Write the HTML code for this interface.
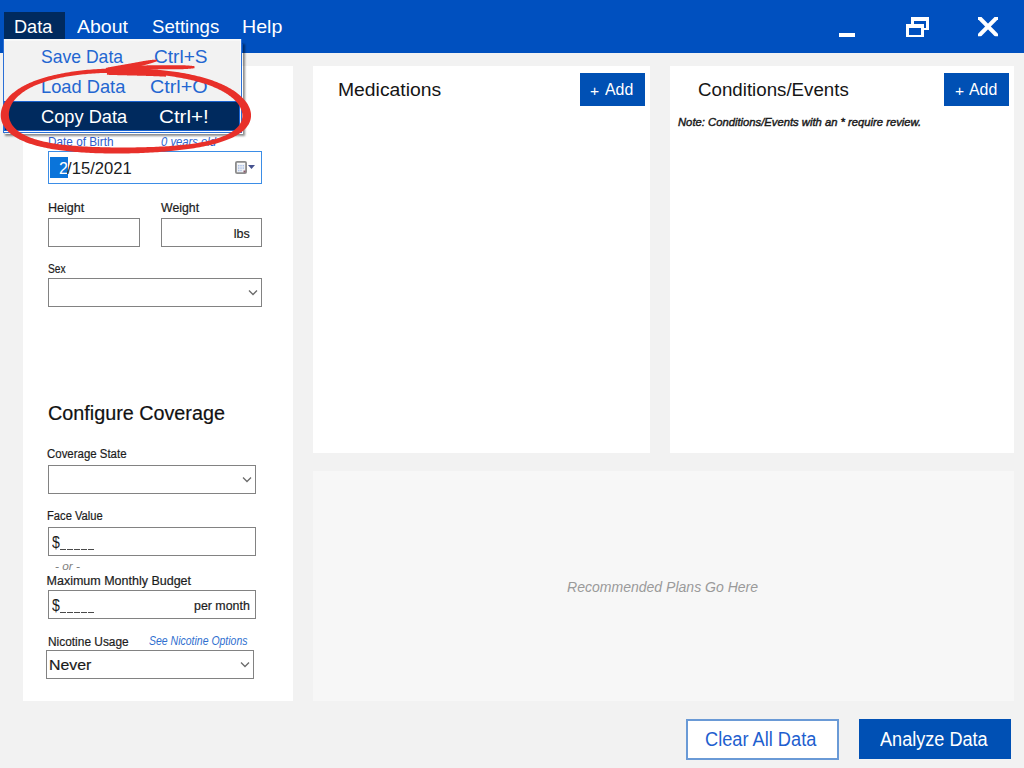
<!DOCTYPE html>
<html><head><meta charset="utf-8">
<style>
html,body{margin:0;padding:0;}
body{width:1024px;height:768px;overflow:hidden;position:relative;background:#f2f2f2;font-family:"Liberation Sans", sans-serif;}
.a{position:absolute;box-sizing:border-box;}
.t{position:absolute;display:block;white-space:pre;line-height:0;transform-origin:0 0;font-family:"Liberation Sans", sans-serif;-webkit-text-stroke:0.2px currentColor;}
.box{position:absolute;box-sizing:border-box;background:#fff;border:1px solid #828282;}
</style></head><body>
<!-- title bar -->
<div class="a" style="left:0;top:0;width:1024px;height:53px;background:#0050bf"></div>
<div class="a" style="left:4px;top:12px;width:61px;height:27px;background:#002a5e"></div>
<div class="a" style="left:839px;top:33px;width:16px;height:4px;background:#fff"></div>
<div class="a" style="left:911px;top:17px;width:18px;height:13px;border:3px solid #fff;border-top-width:4px;border-bottom-width:2px"></div>
<div class="a" style="left:906px;top:24px;width:18px;height:13px;border:3px solid #fff;border-top-width:4px;border-bottom-width:2px;background:#0050bf"></div>
<svg class="a" style="left:0;top:0" width="1024" height="60"><defs><clipPath id="xc"><rect x="978" y="17" width="20" height="19.2"/></clipPath></defs><g clip-path="url(#xc)" stroke="#fff" stroke-width="4"><line x1="977.2" y1="15.5" x2="998.8" y2="37.5"/><line x1="998.8" y1="15.5" x2="977.2" y2="37.5"/></g></svg>
<!-- panels -->
<div class="a" style="left:23px;top:66px;width:270px;height:635px;background:#fff"></div>
<div class="a" style="left:313px;top:66px;width:337px;height:387px;background:#fff"></div>
<div class="a" style="left:670px;top:66px;width:344px;height:387px;background:#fff"></div>
<div class="a" style="left:313px;top:471px;width:701px;height:230px;background:#f7f7f7"></div>
<!-- date picker -->
<div class="box" style="left:48px;top:151px;width:214px;height:33px;border-color:#3b8de6"></div>
<div class="a" style="left:50px;top:157px;width:18px;height:21px;background:#0a74da"></div>
<svg class="a" style="left:234px;top:160px" width="14" height="15"><rect x="1.9" y="1.9" width="10.2" height="11.2" rx="1.2" fill="#eef0f4" stroke="#8c8c8c" stroke-width="1.8"/><rect x="3" y="3" width="8" height="1.2" fill="#fafafa"/>
<g fill="#aac0e8"><rect x="4" y="5" width="1.4" height="1.4"/><rect x="6.3" y="5" width="1.4" height="1.4"/><rect x="8.6" y="5" width="1.4" height="1.4"/><rect x="4" y="7.4" width="1.4" height="1.4"/><rect x="6.3" y="7.4" width="1.4" height="1.4"/><rect x="8.6" y="7.4" width="1.4" height="1.4"/><rect x="4" y="9.8" width="1.4" height="1.4"/><rect x="6.3" y="9.8" width="1.4" height="1.4"/></g><rect x="9.5" y="10.5" width="2" height="2" fill="#8a5a6a"/></svg>
<svg class="a" style="left:248px;top:165px" width="8" height="5"><polygon points="0,0 7,0 3.5,4" fill="#45528f"/></svg>
<!-- height/weight/sex -->
<div class="box" style="left:48px;top:218px;width:92px;height:29px"></div>
<div class="box" style="left:161px;top:218px;width:101px;height:29px"></div>
<div class="box" style="left:48px;top:278px;width:214px;height:29px"></div>
<svg class="a" style="left:248px;top:289px" width="11" height="8"><polyline points="1,1.5 5,5.5 9,1.5" fill="none" stroke="#6b6b6b" stroke-width="1.3"/></svg>
<!-- coverage -->
<div class="box" style="left:48px;top:465px;width:208px;height:29px"></div>
<svg class="a" style="left:242px;top:476px" width="11" height="8"><polyline points="1,1.5 5,5.5 9,1.5" fill="none" stroke="#6b6b6b" stroke-width="1.3"/></svg>
<div class="box" style="left:48px;top:527px;width:208px;height:29px"></div>
<div class="box" style="left:48px;top:590px;width:208px;height:29px"></div>
<div class="box" style="left:46px;top:650px;width:208px;height:29px"></div>
<svg class="a" style="left:240px;top:661px" width="11" height="8"><polyline points="1,1.5 5,5.5 9,1.5" fill="none" stroke="#6b6b6b" stroke-width="1.3"/></svg>
<!-- underscores -->
<div class="a" style="left:60px;top:549px;width:6px;height:1px;background:#4a4a4a"></div><div class="a" style="left:67px;top:549px;width:6px;height:1px;background:#4a4a4a"></div><div class="a" style="left:74px;top:549px;width:6px;height:1px;background:#4a4a4a"></div><div class="a" style="left:81px;top:549px;width:6px;height:1px;background:#4a4a4a"></div><div class="a" style="left:88px;top:549px;width:6px;height:1px;background:#4a4a4a"></div>
<div class="a" style="left:60px;top:612px;width:6px;height:1px;background:#4a4a4a"></div><div class="a" style="left:67px;top:612px;width:6px;height:1px;background:#4a4a4a"></div><div class="a" style="left:74px;top:612px;width:6px;height:1px;background:#4a4a4a"></div><div class="a" style="left:81px;top:612px;width:6px;height:1px;background:#4a4a4a"></div><div class="a" style="left:88px;top:612px;width:6px;height:1px;background:#4a4a4a"></div>
<!-- add buttons -->
<div class="a" style="left:580px;top:73px;width:65px;height:33px;background:#0050b4"></div>
<div class="a" style="left:944px;top:73px;width:65px;height:33px;background:#0050b4"></div>
<!-- bottom buttons -->
<div class="a" style="left:686px;top:719px;width:153px;height:41px;background:#fff;border:2px solid #6a9ad6"></div>
<div class="a" style="left:859px;top:719px;width:152px;height:40px;background:#0050b4"></div>
<!-- dropdown -->
<div class="a" style="left:5px;top:44px;width:238px;height:90px;box-shadow:1px 1px 2px 1px rgba(0,0,0,0.45)"></div>
<div class="a" style="left:3px;top:39px;width:239px;height:94px;background:#f2f2f2;border:1px solid #2b6fd6;border-top:none"></div>
<div class="a" style="left:4px;top:39px;width:237px;height:2px;background:#f8f8f8"></div>
<div class="a" style="left:240px;top:39px;width:1px;height:93px;background:#fafafa"></div>
<div class="a" style="left:4px;top:131px;width:237px;height:1px;background:#fafafa"></div>
<div class="a" style="left:4px;top:101px;width:236px;height:30px;background:#002a5e;border:1px solid #1a62d0"></div>
<span class="t" style="left:13.58px;top:27.42px;font-size:19.0px;color:#ffffff;font-style:normal;font-weight:normal;transform:scaleX(0.9543);-webkit-text-stroke:0;">Data</span>
<span class="t" style="left:77.40px;top:27.42px;font-size:19.0px;color:#ffffff;font-style:normal;font-weight:normal;transform:scaleX(1.0258);-webkit-text-stroke:0;">About</span>
<span class="t" style="left:152.22px;top:27.42px;font-size:19.0px;color:#ffffff;font-style:normal;font-weight:normal;transform:scaleX(0.9798);-webkit-text-stroke:0;">Settings</span>
<span class="t" style="left:242.37px;top:27.42px;font-size:19.0px;color:#ffffff;font-style:normal;font-weight:normal;transform:scaleX(1.0320);-webkit-text-stroke:0;">Help</span>
<span class="t" style="left:41.15px;top:57.22px;font-size:19.0px;color:#2366d1;font-style:normal;font-weight:normal;transform:scaleX(0.9247);-webkit-text-stroke:0;">Save Data</span>
<span class="t" style="left:154.00px;top:57.22px;font-size:19.0px;color:#2366d1;font-style:normal;font-weight:normal;transform:scaleX(1.0053);-webkit-text-stroke:0;">Ctrl+S</span>
<span class="t" style="left:40.97px;top:87.42px;font-size:19.0px;color:#2366d1;font-style:normal;font-weight:normal;transform:scaleX(0.9616);-webkit-text-stroke:0;">Load Data</span>
<span class="t" style="left:150.07px;top:87.42px;font-size:19.0px;color:#2366d1;font-style:normal;font-weight:normal;transform:scaleX(1.0390);-webkit-text-stroke:0;">Ctrl+O</span>
<span class="t" style="left:40.95px;top:117.22px;font-size:19.0px;color:#ffffff;font-style:normal;font-weight:normal;transform:scaleX(0.9596);-webkit-text-stroke:0;">Copy Data</span>
<span class="t" style="left:158.83px;top:117.22px;font-size:19.0px;color:#ffffff;font-style:normal;font-weight:normal;transform:scaleX(1.0851);-webkit-text-stroke:0;">Ctrl+!</span>
<span class="t" style="left:48.38px;top:141.54px;font-size:12.3px;color:#2f5ccc;font-style:normal;font-weight:normal;transform:scaleX(0.9578);-webkit-text-stroke:0;">Date of Birth</span>
<span class="t" style="left:161.25px;top:141.54px;font-size:12.3px;color:#2f66d0;font-style:italic;font-weight:normal;transform:scaleX(0.9163);-webkit-text-stroke:0;">0 years old</span>
<span class="t" style="left:59.15px;top:168.56px;font-size:15.7px;color:#ffffff;font-style:normal;font-weight:normal;transform:scaleX(1.0191);-webkit-text-stroke:0;">2</span>
<span class="t" style="left:67.40px;top:168.56px;font-size:15.7px;color:#1c1c1c;font-style:normal;font-weight:normal;transform:scaleX(1.0616);-webkit-text-stroke:0;">/15/2021</span>
<span class="t" style="left:47.62px;top:207.97px;font-size:12.5px;color:#1c1c1c;font-style:normal;font-weight:normal;transform:scaleX(1.0057);">Height</span>
<span class="t" style="left:161.10px;top:207.97px;font-size:12.5px;color:#1c1c1c;font-style:normal;font-weight:normal;transform:scaleX(0.9840);">Weight</span>
<span class="t" style="left:233.82px;top:233.87px;font-size:12.5px;color:#1c1c1c;font-style:normal;font-weight:normal;">lbs</span>
<span class="t" style="left:47.78px;top:268.67px;font-size:12.5px;color:#1c1c1c;font-style:normal;font-weight:normal;transform:scaleX(0.8180);">Sex</span>
<span class="t" style="left:47.57px;top:412.77px;font-size:20px;color:#111;font-style:normal;font-weight:normal;transform:scaleX(0.9885);">Configure Coverage</span>
<span class="t" style="left:47.06px;top:453.87px;font-size:12.5px;color:#1c1c1c;font-style:normal;font-weight:normal;transform:scaleX(0.9153);">Coverage State</span>
<span class="t" style="left:46.73px;top:515.87px;font-size:12.5px;color:#1c1c1c;font-style:normal;font-weight:normal;transform:scaleX(0.8944);">Face Value</span>
<span class="t" style="left:51.70px;top:542.53px;font-size:16.66px;color:#1c1c1c;font-style:normal;font-weight:normal;transform:scaleX(0.8451);-webkit-text-stroke:0;">$</span>
<span class="t" style="left:55.04px;top:566.35px;font-size:11.4px;color:#808080;font-style:italic;font-weight:normal;transform:scaleX(1.0388);-webkit-text-stroke:0;">- or -</span>
<span class="t" style="left:46.53px;top:580.87px;font-size:12.5px;color:#1c1c1c;font-style:normal;font-weight:normal;">Maximum Monthly Budget</span>
<span class="t" style="left:51.70px;top:605.32px;font-size:17.15px;color:#1c1c1c;font-style:normal;font-weight:normal;transform:scaleX(0.8210);-webkit-text-stroke:0;">$</span>
<span class="t" style="left:193.83px;top:605.97px;font-size:12.5px;color:#1c1c1c;font-style:normal;font-weight:normal;transform:scaleX(0.9909);">per month</span>
<span class="t" style="left:47.67px;top:642.17px;font-size:12.5px;color:#1c1c1c;font-style:normal;font-weight:normal;transform:scaleX(0.9522);">Nicotine Usage</span>
<span class="t" style="left:149.34px;top:640.64px;font-size:12px;color:#2f6fcf;font-style:italic;font-weight:normal;transform:scaleX(0.8740);-webkit-text-stroke:0;">See Nicotine Options</span>
<span class="t" style="left:48.56px;top:664.73px;font-size:15.5px;color:#1a1a1a;font-style:normal;font-weight:normal;transform:scaleX(1.0235);">Never</span>
<span class="t" style="left:337.59px;top:90.35px;font-size:18.9px;color:#151515;font-style:normal;font-weight:normal;transform:scaleX(1.0235);-webkit-text-stroke:0;">Medications</span>
<span class="t" style="left:590.47px;top:90.52px;font-size:15.2px;color:#ffffff;font-style:normal;font-weight:normal;transform:scaleX(1.0263);-webkit-text-stroke:0;">+</span>
<span class="t" style="left:605.00px;top:89.28px;font-size:16.5px;color:#ffffff;font-style:normal;font-weight:normal;transform:scaleX(0.9637);-webkit-text-stroke:0;">Add</span>
<span class="t" style="left:698.22px;top:90.25px;font-size:18.9px;color:#151515;font-style:normal;font-weight:normal;transform:scaleX(0.9903);-webkit-text-stroke:0;">Conditions/Events</span>
<span class="t" style="left:954.77px;top:90.52px;font-size:15.2px;color:#ffffff;font-style:normal;font-weight:normal;transform:scaleX(1.0263);-webkit-text-stroke:0;">+</span>
<span class="t" style="left:969.30px;top:89.28px;font-size:16.5px;color:#ffffff;font-style:normal;font-weight:normal;transform:scaleX(0.9637);-webkit-text-stroke:0;">Add</span>
<span class="t" style="left:678.12px;top:121.98px;font-size:11.6px;color:#1a1a1a;font-style:italic;font-weight:normal;transform:scaleX(0.9702);-webkit-text-stroke:0.45px #1a1a1a;">Note: Conditions/Events with an * require review.</span>
<span class="t" style="left:566.58px;top:587.00px;font-size:15.0px;color:#9a9a9a;font-style:italic;font-weight:normal;transform:scaleX(0.9354);-webkit-text-stroke:0;">Recommended Plans Go Here</span>
<span class="t" style="left:704.55px;top:738.64px;font-size:19.5px;color:#1f5fcf;font-style:normal;font-weight:normal;transform:scaleX(0.9339);-webkit-text-stroke:0;">Clear All Data</span>
<span class="t" style="left:879.50px;top:738.74px;font-size:19.5px;color:#ffffff;font-style:normal;font-weight:normal;transform:scaleX(0.9285);-webkit-text-stroke:0;">Analyze Data</span>
<!-- red annotation -->
<svg class="a" style="left:0;top:0" width="1024" height="200"><path fill="#e8302a" fill-rule="evenodd" d="M0.84,113.03 L0.94,112.20 L1.07,111.38 L1.23,110.55 L1.43,109.73 L1.66,108.90 L1.92,108.08 L2.21,107.26 L2.54,106.44 L2.89,105.62 L3.28,104.81 L3.70,103.99 L4.15,103.18 L4.63,102.38 L5.14,101.58 L5.68,100.78 L6.26,99.99 L6.86,99.20 L7.50,98.42 L8.17,97.64 L8.87,96.87 L9.60,96.10 L10.36,95.34 L11.16,94.59 L11.98,93.85 L12.84,93.11 L13.72,92.38 L14.64,91.66 L15.59,90.95 L16.56,90.24 L17.57,89.54 L18.61,88.86 L19.68,88.18 L20.79,87.51 L21.92,86.85 L23.08,86.20 L24.27,85.56 L25.50,84.93 L26.75,84.31 L28.03,83.70 L29.34,83.10 L30.69,82.51 L32.06,81.93 L33.46,81.37 L34.89,80.81 L36.35,80.27 L37.83,79.73 L39.35,79.21 L40.89,78.70 L42.47,78.20 L44.06,77.72 L45.69,77.24 L47.34,76.78 L49.02,76.33 L50.73,75.89 L52.46,75.46 L54.22,75.05 L56.00,74.64 L57.80,74.25 L59.63,73.88 L61.49,73.51 L63.36,73.15 L65.26,72.81 L67.18,72.48 L69.12,72.17 L71.08,71.86 L73.06,71.57 L75.07,71.29 L77.09,71.02 L79.12,70.76 L81.18,70.52 L83.25,70.29 L85.34,70.07 L87.45,69.86 L89.57,69.67 L91.70,69.49 L93.84,69.32 L96.00,69.16 L98.17,69.02 L100.35,68.89 L102.54,68.76 L104.74,68.66 L106.95,68.56 L109.17,68.48 L111.39,68.41 L113.62,68.35 L115.85,68.30 L118.09,68.27 L120.33,68.25 L122.57,68.24 L124.81,68.24 L127.06,68.26 L129.30,68.29 L131.55,68.33 L133.79,68.38 L136.03,68.44 L138.26,68.52 L140.49,68.61 L142.71,68.71 L144.93,68.83 L147.14,68.96 L149.35,69.10 L151.54,69.25 L153.73,69.41 L155.90,69.59 L158.06,69.78 L160.21,69.98 L162.35,70.20 L164.48,70.42 L166.59,70.66 L168.68,70.91 L170.76,71.18 L172.82,71.45 L174.87,71.74 L176.89,72.04 L178.90,72.36 L180.89,72.68 L182.86,73.02 L184.81,73.37 L186.74,73.74 L188.65,74.11 L190.53,74.50 L192.39,74.90 L194.23,75.31 L196.05,75.74 L197.84,76.17 L199.60,76.62 L201.34,77.08 L203.06,77.55 L204.75,78.03 L206.41,78.53 L208.05,79.03 L209.65,79.55 L211.24,80.08 L212.79,80.61 L214.31,81.16 L215.81,81.73 L217.28,82.30 L218.72,82.88 L220.13,83.47 L221.51,84.07 L222.86,84.68 L224.18,85.31 L225.47,85.94 L226.73,86.58 L227.96,87.23 L229.16,87.89 L230.33,88.55 L231.47,89.23 L232.57,89.91 L233.65,90.60 L234.69,91.30 L235.71,92.01 L236.69,92.72 L237.64,93.44 L238.55,94.17 L239.44,94.90 L240.29,95.64 L241.11,96.39 L241.90,97.14 L242.66,97.89 L243.39,98.65 L244.08,99.42 L244.74,100.18 L245.37,100.96 L245.96,101.73 L246.53,102.51 L247.06,103.29 L247.55,104.07 L248.02,104.86 L248.45,105.65 L248.85,106.44 L249.21,107.22 L249.55,108.02 L249.85,108.81 L250.11,109.60 L250.34,110.39 L250.54,111.18 L250.71,111.96 L250.84,112.75 L250.94,113.54 L251.00,114.32 L251.03,115.10 L251.03,115.88 L250.99,116.65 L250.91,117.42 L250.81,118.19 L250.66,118.96 L250.49,119.72 L250.27,120.47 L250.03,121.22 L249.74,121.97 L249.43,122.71 L249.07,123.44 L248.68,124.17 L248.26,124.89 L247.80,125.60 L247.30,126.31 L246.77,127.01 L246.20,127.71 L245.60,128.40 L244.96,129.08 L244.28,129.75 L243.57,130.41 L242.82,131.07 L242.03,131.72 L241.21,132.35 L240.35,132.98 L239.46,133.61 L238.52,134.22 L237.55,134.82 L236.55,135.42 L235.51,136.00 L234.43,136.58 L233.31,137.15 L232.16,137.70 L230.97,138.25 L229.75,138.79 L228.48,139.32 L227.19,139.84 L225.86,140.34 L224.49,140.84 L223.08,141.33 L221.64,141.81 L220.17,142.28 L218.66,142.74 L217.12,143.19 L215.54,143.63 L213.93,144.06 L212.29,144.47 L210.61,144.88 L208.90,145.28 L207.16,145.67 L205.39,146.05 L203.58,146.42 L201.75,146.78 L199.88,147.13 L197.99,147.47 L196.06,147.81 L194.11,148.13 L192.13,148.44 L190.13,148.74 L188.09,149.03 L186.04,149.32 L183.95,149.59 L181.84,149.86 L179.71,150.11 L177.56,150.36 L175.39,150.59 L173.19,150.82 L170.97,151.04 L168.74,151.25 L166.49,151.45 L164.22,151.64 L161.93,151.82 L159.63,151.99 L157.31,152.15 L154.98,152.31 L152.64,152.45 L150.29,152.59 L147.92,152.72 L145.55,152.83 L143.17,152.94 L140.78,153.04 L138.38,153.13 L135.98,153.21 L133.58,153.29 L131.17,153.35 L128.76,153.40 L126.35,153.45 L123.94,153.48 L121.53,153.51 L119.12,153.52 L116.72,153.53 L114.32,153.53 L111.92,153.51 L109.54,153.49 L107.16,153.46 L104.79,153.42 L102.42,153.36 L100.07,153.30 L97.73,153.23 L95.41,153.15 L93.10,153.05 L90.80,152.95 L88.52,152.84 L86.25,152.71 L84.00,152.58 L81.77,152.43 L79.56,152.28 L77.37,152.11 L75.20,151.93 L73.05,151.74 L70.93,151.54 L68.83,151.33 L66.75,151.10 L64.70,150.87 L62.67,150.62 L60.67,150.36 L58.69,150.09 L56.75,149.81 L54.83,149.51 L52.94,149.21 L51.08,148.89 L49.25,148.56 L47.45,148.21 L45.68,147.86 L43.94,147.49 L42.23,147.11 L40.56,146.72 L38.91,146.32 L37.30,145.90 L35.73,145.47 L34.18,145.03 L32.67,144.58 L31.20,144.12 L29.76,143.64 L28.35,143.15 L26.98,142.65 L25.64,142.14 L24.34,141.61 L23.07,141.07 L21.84,140.53 L20.64,139.97 L19.48,139.40 L18.35,138.81 L17.26,138.22 L16.21,137.61 L15.19,137.00 L14.21,136.37 L13.26,135.74 L12.34,135.09 L11.47,134.43 L10.62,133.76 L9.82,133.09 L9.04,132.40 L8.31,131.70 L7.60,131.00 L6.94,130.29 L6.30,129.57 L5.71,128.84 L5.14,128.10 L4.61,127.35 L4.12,126.60 L3.66,125.84 L3.23,125.08 L2.84,124.30 L2.48,123.53 L2.16,122.74 L1.87,121.95 L1.61,121.16 L1.38,120.36 L1.19,119.56 L1.03,118.75 L0.91,117.94 L0.81,117.13 L0.75,116.31 L0.73,115.49 L0.73,114.67 L0.77,113.85 Z M8.87,113.52 L8.93,112.74 L9.02,111.96 L9.14,111.18 L9.30,110.39 L9.49,109.60 L9.71,108.82 L9.97,108.03 L10.26,107.24 L10.58,106.46 L10.94,105.68 L11.33,104.90 L11.75,104.12 L12.21,103.34 L12.70,102.57 L13.22,101.80 L13.77,101.04 L14.35,100.28 L14.97,99.53 L15.62,98.78 L16.30,98.04 L17.02,97.30 L17.76,96.57 L18.54,95.85 L19.35,95.13 L20.19,94.43 L21.06,93.73 L21.96,93.04 L22.89,92.36 L23.85,91.69 L24.84,91.03 L25.86,90.37 L26.91,89.73 L27.99,89.10 L29.10,88.48 L30.23,87.87 L31.40,87.27 L32.59,86.68 L33.81,86.10 L35.06,85.54 L36.33,84.99 L37.63,84.44 L38.96,83.91 L40.31,83.40 L41.69,82.89 L43.10,82.40 L44.53,81.92 L45.98,81.45 L47.45,81.00 L48.96,80.55 L50.48,80.13 L52.02,79.71 L53.59,79.30 L55.18,78.91 L56.79,78.53 L58.42,78.17 L60.07,77.81 L61.75,77.47 L63.44,77.15 L65.15,76.83 L66.87,76.53 L68.62,76.24 L70.38,75.96 L72.16,75.69 L73.95,75.44 L75.76,75.20 L77.59,74.97 L79.43,74.75 L81.28,74.54 L83.15,74.35 L85.03,74.17 L86.92,73.99 L88.82,73.83 L90.73,73.69 L92.66,73.55 L94.59,73.42 L96.53,73.31 L98.48,73.20 L100.44,73.11 L102.41,73.02 L104.38,72.95 L106.36,72.89 L108.34,72.84 L110.33,72.79 L112.32,72.76 L114.32,72.74 L116.32,72.73 L118.32,72.73 L120.32,72.73 L122.33,72.75 L124.33,72.78 L126.33,72.82 L128.34,72.86 L130.34,72.92 L132.34,72.99 L134.34,73.06 L136.33,73.15 L138.32,73.24 L140.30,73.34 L142.29,73.46 L144.26,73.58 L146.23,73.71 L148.19,73.85 L150.15,74.00 L152.09,74.17 L154.03,74.34 L155.96,74.52 L157.88,74.70 L159.79,74.90 L161.69,75.11 L163.58,75.33 L165.45,75.56 L167.32,75.80 L169.17,76.04 L171.01,76.30 L172.83,76.57 L174.64,76.85 L176.44,77.13 L178.22,77.43 L179.98,77.74 L181.73,78.06 L183.46,78.39 L185.17,78.73 L186.87,79.07 L188.55,79.43 L190.21,79.80 L191.85,80.18 L193.47,80.57 L195.07,80.98 L196.65,81.39 L198.21,81.81 L199.75,82.24 L201.27,82.69 L202.77,83.14 L204.24,83.60 L205.69,84.08 L207.12,84.56 L208.53,85.06 L209.91,85.56 L211.27,86.08 L212.60,86.61 L213.91,87.14 L215.19,87.69 L216.45,88.24 L217.68,88.81 L218.88,89.39 L220.06,89.97 L221.21,90.56 L222.34,91.17 L223.43,91.78 L224.50,92.40 L225.54,93.03 L226.56,93.67 L227.54,94.31 L228.49,94.97 L229.42,95.63 L230.31,96.30 L231.18,96.97 L232.02,97.66 L232.82,98.35 L233.59,99.04 L234.34,99.74 L235.05,100.45 L235.73,101.16 L236.38,101.88 L236.99,102.60 L237.58,103.33 L238.13,104.06 L238.65,104.79 L239.13,105.53 L239.59,106.27 L240.01,107.01 L240.39,107.75 L240.74,108.50 L241.06,109.25 L241.35,109.99 L241.60,110.74 L241.81,111.49 L241.99,112.24 L242.14,112.98 L242.25,113.73 L242.32,114.47 L242.36,115.21 L242.37,115.95 L242.34,116.68 L242.27,117.42 L242.17,118.14 L242.03,118.87 L241.85,119.59 L241.64,120.30 L241.40,121.01 L241.12,121.72 L240.80,122.42 L240.44,123.11 L240.05,123.79 L239.63,124.47 L239.16,125.14 L238.66,125.80 L238.13,126.46 L237.56,127.10 L236.95,127.74 L236.31,128.37 L235.63,128.99 L234.91,129.60 L234.16,130.20 L233.38,130.79 L232.56,131.37 L231.70,131.94 L230.81,132.50 L229.88,133.05 L228.92,133.59 L227.92,134.12 L226.90,134.64 L225.83,135.14 L224.73,135.64 L223.60,136.12 L222.44,136.60 L221.24,137.06 L220.01,137.51 L218.75,137.95 L217.46,138.37 L216.13,138.79 L214.78,139.19 L213.39,139.58 L211.98,139.97 L210.53,140.34 L209.06,140.69 L207.55,141.04 L206.02,141.38 L204.46,141.70 L202.87,142.02 L201.25,142.32 L199.61,142.62 L197.95,142.90 L196.25,143.17 L194.54,143.43 L192.80,143.69 L191.03,143.93 L189.25,144.16 L187.44,144.38 L185.61,144.60 L183.76,144.80 L181.88,145.00 L179.99,145.18 L178.08,145.36 L176.15,145.53 L174.21,145.69 L172.25,145.84 L170.27,145.99 L168.27,146.13 L166.27,146.26 L164.24,146.38 L162.21,146.49 L160.16,146.60 L158.10,146.70 L156.03,146.80 L153.95,146.88 L151.86,146.97 L149.77,147.04 L147.66,147.11 L145.55,147.17 L143.43,147.23 L141.31,147.28 L139.18,147.32 L137.05,147.36 L134.92,147.40 L132.78,147.42 L130.64,147.45 L128.50,147.46 L126.37,147.47 L124.23,147.48 L122.09,147.48 L119.96,147.48 L117.83,147.47 L115.71,147.45 L113.58,147.43 L111.47,147.40 L109.36,147.37 L107.26,147.33 L105.16,147.29 L103.08,147.24 L101.00,147.18 L98.94,147.12 L96.88,147.06 L94.84,146.98 L92.80,146.90 L90.78,146.82 L88.78,146.72 L86.78,146.62 L84.81,146.52 L82.84,146.40 L80.90,146.28 L78.97,146.15 L77.05,146.02 L75.16,145.87 L73.28,145.72 L71.42,145.56 L69.58,145.39 L67.76,145.21 L65.97,145.03 L64.19,144.83 L62.43,144.63 L60.70,144.41 L58.99,144.19 L57.30,143.96 L55.63,143.71 L53.99,143.46 L52.37,143.20 L50.78,142.92 L49.21,142.64 L47.67,142.34 L46.15,142.04 L44.66,141.72 L43.20,141.39 L41.76,141.05 L40.35,140.70 L38.97,140.33 L37.62,139.96 L36.29,139.57 L35.00,139.17 L33.73,138.76 L32.49,138.34 L31.28,137.90 L30.10,137.45 L28.95,137.00 L27.83,136.52 L26.74,136.04 L25.68,135.54 L24.66,135.04 L23.66,134.52 L22.69,133.99 L21.76,133.44 L20.86,132.89 L19.99,132.32 L19.15,131.74 L18.34,131.15 L17.56,130.55 L16.82,129.94 L16.11,129.32 L15.43,128.69 L14.79,128.05 L14.18,127.39 L13.60,126.73 L13.05,126.06 L12.54,125.38 L12.06,124.69 L11.61,123.99 L11.20,123.29 L10.82,122.57 L10.47,121.85 L10.16,121.12 L9.88,120.38 L9.63,119.64 L9.42,118.89 L9.24,118.14 L9.10,117.38 L8.98,116.62 L8.91,115.85 L8.86,115.08 L8.85,114.30 Z"/><path fill="#e8302a" d="M106.15,72.09 L106.44,72.07 L106.74,72.05 L107.03,72.03 L107.33,72.01 L107.63,71.99 L107.92,71.96 L108.22,71.94 L108.51,71.92 L108.81,71.90 L109.11,71.87 L109.40,71.85 L109.70,71.83 L109.99,71.81 L110.29,71.79 L110.59,71.76 L110.88,71.74 L111.18,71.72 L111.47,71.70 L111.77,71.68 L112.07,71.65 L112.36,71.63 L112.66,71.61 L112.95,71.59 L113.25,71.57 L113.55,71.54 L113.84,71.52 L114.14,71.50 L114.43,71.48 L114.73,71.46 L115.02,71.44 L115.32,71.41 L115.62,71.39 L115.91,71.37 L116.21,71.35 L116.50,71.33 L116.80,71.31 L117.10,71.28 L117.39,71.26 L117.69,71.24 L117.98,71.22 L118.28,71.20 L118.58,71.18 L118.87,71.16 L119.17,71.13 L119.46,71.11 L119.76,71.09 L120.06,71.07 L120.35,71.05 L120.65,71.03 L120.94,71.01 L121.24,70.99 L121.54,70.97 L121.83,70.95 L122.13,70.92 L122.42,70.90 L122.72,70.88 L123.01,70.86 L123.31,70.84 L123.61,70.82 L123.90,70.80 L124.20,70.78 L124.49,70.76 L124.79,70.74 L125.09,70.72 L125.38,70.70 L125.68,70.68 L125.97,70.66 L126.27,70.64 L126.56,70.62 L126.86,70.60 L127.16,70.58 L127.45,70.57 L127.75,70.55 L128.04,70.53 L128.34,70.51 L128.63,70.49 L128.93,70.47 L129.23,70.45 L129.52,70.43 L129.82,70.42 L130.11,70.40 L130.41,70.38 L130.70,70.36 L131.00,70.34 L131.29,70.33 L131.59,70.31 L131.89,70.29 L132.18,70.27 L132.48,70.25 L132.77,70.24 L133.07,70.22 L133.36,70.20 L133.66,70.19 L133.95,70.17 L134.25,70.15 L134.55,70.14 L134.84,70.12 L135.14,70.10 L135.43,70.09 L135.73,70.07 L136.02,70.06 L136.32,70.04 L136.61,70.03 L136.91,70.01 L137.20,70.00 L137.50,69.98 L137.79,69.97 L138.09,69.95 L138.39,69.94 L138.68,69.92 L138.98,69.91 L139.27,69.89 L139.57,69.88 L139.86,69.87 L140.16,69.85 L140.45,69.84 L140.75,69.82 L141.04,69.81 L141.34,69.80 L141.63,69.79 L141.93,69.77 L142.22,69.76 L142.52,69.75 L142.81,69.74 L143.11,69.72 L143.40,69.71 L143.70,69.70 L143.99,69.69 L144.29,69.68 L144.58,69.67 L144.88,69.66 L145.17,69.65 L145.47,69.64 L145.76,69.63 L146.06,69.62 L146.35,69.61 L146.65,69.60 L146.94,69.59 L147.24,69.58 L147.53,69.57 L147.82,69.56 L148.12,69.55 L148.41,69.54 L148.71,69.53 L149.00,69.53 L149.30,69.52 L149.59,69.51 L149.89,69.50 L150.18,69.50 L150.48,69.49 L150.77,69.48 L151.07,69.48 L151.36,69.47 L151.66,69.46 L151.95,69.46 L152.24,69.45 L152.54,69.45 L152.83,69.44 L153.13,69.44 L153.42,69.43 L153.72,69.43 L154.02,69.42 L154.31,69.42 L154.61,69.41 L154.90,69.41 L155.20,69.40 L155.49,69.40 L155.79,69.40 L156.08,69.39 L156.38,69.39 L156.67,69.39 L156.97,69.38 L157.27,69.38 L157.56,69.38 L157.86,69.38 L158.15,69.37 L158.45,69.37 L158.75,69.37 L159.04,69.37 L159.34,69.37 L159.63,69.36 L159.93,69.36 L160.23,69.36 L160.52,69.36 L160.82,69.36 L161.12,69.36 L161.41,69.36 L161.71,69.36 L162.01,69.35 L162.30,69.35 L162.60,69.35 L162.90,69.35 L163.19,69.35 L163.49,69.35 L163.79,69.35 L164.09,69.35 L164.38,69.35 L164.68,69.35 L164.98,69.35 L165.28,69.35 L165.57,69.35 L165.87,69.35 L166.17,69.35 L166.47,69.35 L166.77,69.35 L167.06,69.35 L167.36,69.35 L167.66,69.35 L167.96,69.35 L168.26,69.35 L168.55,69.35 L168.85,69.35 L169.15,69.35 L169.45,69.35 L169.75,69.35 L170.04,69.35 L170.34,69.35 L170.64,69.35 L170.94,69.35 L171.23,69.35 L171.53,69.35 L171.83,69.35 L172.13,69.35 L172.43,69.35 L172.72,69.35 L173.02,69.35 L173.32,69.35 L173.62,69.34 L173.91,69.34 L174.21,69.34 L174.51,69.34 L174.81,69.34 L175.10,69.33 L175.40,69.33 L175.70,69.33 L176.00,69.33 L176.29,69.32 L176.59,69.32 L176.89,69.31 L177.18,69.31 L177.48,69.31 L177.78,69.30 L178.08,69.29 L178.37,69.29 L178.67,69.28 L178.97,69.28 L179.26,69.27 L179.56,69.26 L179.85,69.26 L180.15,69.25 L180.45,69.24 L180.74,69.23 L181.04,69.22 L181.33,69.21 L181.63,69.20 L181.92,69.19 L182.22,69.18 L182.52,69.17 L182.81,69.16 L183.11,69.15 L183.40,69.13 L183.70,69.12 L183.99,69.11 L184.28,69.09 L184.58,69.08 L184.87,69.06 L185.17,69.05 L185.46,69.03 L185.75,69.01 L186.05,69.00 L186.34,68.98 L186.64,68.96 L186.93,68.94 L187.22,68.92 L187.51,68.90 L187.81,68.88 L188.10,68.86 L188.39,68.84 L188.68,68.81 L188.98,68.79 L189.27,68.77 L189.56,68.74 L189.85,68.71 L190.14,68.69 L190.44,68.66 L190.73,68.63 L191.02,68.60 L191.31,68.57 L191.60,68.54 L191.89,68.51 L192.18,68.48 L192.47,68.45 L192.76,68.42 L193.05,68.38 L193.34,68.35 L193.63,68.31 L193.92,68.28 L194.21,68.24 L194.50,68.20 L194.50,66.20 L194.22,66.16 L193.93,66.12 L193.64,66.08 L193.35,66.04 L193.06,66.01 L192.77,65.97 L192.47,65.94 L192.18,65.90 L191.89,65.87 L191.60,65.84 L191.31,65.81 L191.02,65.78 L190.73,65.75 L190.44,65.72 L190.14,65.70 L189.85,65.67 L189.56,65.64 L189.27,65.62 L188.97,65.60 L188.68,65.57 L188.39,65.55 L188.09,65.53 L187.80,65.51 L187.51,65.49 L187.21,65.47 L186.92,65.45 L186.62,65.44 L186.33,65.42 L186.04,65.40 L185.74,65.39 L185.45,65.37 L185.15,65.36 L184.86,65.34 L184.56,65.33 L184.27,65.32 L183.97,65.31 L183.68,65.30 L183.38,65.29 L183.09,65.28 L182.79,65.27 L182.50,65.26 L182.20,65.25 L181.90,65.24 L181.61,65.24 L181.31,65.23 L181.02,65.22 L180.72,65.22 L180.42,65.21 L180.13,65.21 L179.83,65.20 L179.53,65.20 L179.24,65.20 L178.94,65.19 L178.64,65.19 L178.35,65.19 L178.05,65.19 L177.75,65.19 L177.46,65.18 L177.16,65.18 L176.86,65.18 L176.57,65.18 L176.27,65.18 L175.97,65.18 L175.67,65.18 L175.38,65.18 L175.08,65.18 L174.78,65.18 L174.49,65.19 L174.19,65.19 L173.89,65.19 L173.59,65.19 L173.30,65.19 L173.00,65.19 L172.70,65.20 L172.40,65.20 L172.11,65.20 L171.81,65.20 L171.51,65.21 L171.21,65.21 L170.92,65.21 L170.62,65.21 L170.32,65.22 L170.02,65.22 L169.73,65.22 L169.43,65.23 L169.13,65.23 L168.84,65.23 L168.54,65.23 L168.24,65.24 L167.94,65.24 L167.65,65.24 L167.35,65.24 L167.05,65.24 L166.75,65.25 L166.46,65.25 L166.16,65.25 L165.86,65.25 L165.57,65.25 L165.27,65.25 L164.97,65.25 L164.68,65.25 L164.38,65.26 L164.08,65.26 L163.79,65.26 L163.49,65.26 L163.19,65.26 L162.89,65.26 L162.60,65.26 L162.30,65.26 L162.00,65.26 L161.71,65.26 L161.41,65.26 L161.11,65.25 L160.81,65.25 L160.52,65.25 L160.22,65.25 L159.92,65.25 L159.63,65.25 L159.33,65.25 L159.03,65.25 L158.73,65.25 L158.44,65.25 L158.14,65.25 L157.84,65.25 L157.54,65.25 L157.25,65.25 L156.95,65.25 L156.65,65.25 L156.35,65.25 L156.06,65.25 L155.76,65.25 L155.46,65.25 L155.16,65.25 L154.87,65.25 L154.57,65.26 L154.27,65.26 L153.97,65.26 L153.67,65.26 L153.38,65.26 L153.08,65.26 L152.78,65.27 L152.48,65.27 L152.18,65.27 L151.89,65.27 L151.59,65.28 L151.29,65.28 L150.99,65.28 L150.69,65.29 L150.40,65.29 L150.10,65.30 L149.80,65.30 L149.50,65.31 L149.20,65.31 L148.90,65.32 L148.61,65.33 L148.31,65.33 L148.01,65.34 L147.71,65.35 L147.41,65.35 L147.11,65.36 L146.82,65.37 L146.52,65.38 L146.22,65.39 L145.92,65.40 L145.62,65.40 L145.32,65.41 L145.03,65.42 L144.73,65.43 L144.43,65.44 L144.13,65.45 L143.83,65.47 L143.54,65.48 L143.24,65.49 L142.94,65.50 L142.64,65.51 L142.34,65.52 L142.05,65.53 L141.75,65.55 L141.45,65.56 L141.15,65.57 L140.85,65.59 L140.56,65.60 L140.26,65.61 L139.96,65.63 L139.66,65.64 L139.36,65.66 L139.07,65.67 L138.77,65.68 L138.47,65.70 L138.17,65.71 L137.88,65.73 L137.58,65.74 L137.28,65.76 L136.98,65.78 L136.69,65.79 L136.39,65.81 L136.09,65.82 L135.79,65.84 L135.49,65.86 L135.20,65.88 L134.90,65.89 L134.60,65.91 L134.30,65.93 L134.01,65.94 L133.71,65.96 L133.41,65.98 L133.12,66.00 L132.82,66.02 L132.52,66.03 L132.22,66.05 L131.93,66.07 L131.63,66.09 L131.33,66.11 L131.03,66.13 L130.74,66.15 L130.44,66.17 L130.14,66.19 L129.85,66.21 L129.55,66.23 L129.25,66.24 L128.95,66.26 L128.66,66.28 L128.36,66.30 L128.06,66.32 L127.77,66.35 L127.47,66.37 L127.17,66.39 L126.88,66.41 L126.58,66.43 L126.28,66.45 L125.98,66.47 L125.69,66.49 L125.39,66.51 L125.09,66.53 L124.80,66.55 L124.50,66.57 L124.20,66.59 L123.91,66.62 L123.61,66.64 L123.31,66.66 L123.02,66.68 L122.72,66.70 L122.42,66.72 L122.13,66.74 L121.83,66.77 L121.53,66.79 L121.24,66.81 L120.94,66.83 L120.64,66.85 L120.35,66.87 L120.05,66.90 L119.76,66.92 L119.46,66.94 L119.16,66.96 L118.87,66.98 L118.57,67.00 L118.27,67.03 L117.98,67.05 L117.68,67.07 L117.39,67.09 L117.09,67.11 L116.79,67.14 L116.50,67.16 L116.20,67.18 L115.91,67.20 L115.61,67.22 L115.31,67.24 L115.02,67.27 L114.72,67.29 L114.43,67.31 L114.13,67.33 L113.83,67.35 L113.54,67.37 L113.24,67.39 L112.95,67.42 L112.65,67.44 L112.35,67.46 L112.06,67.48 L111.76,67.50 L111.47,67.52 L111.17,67.54 L110.88,67.56 L110.58,67.58 L110.28,67.61 L109.99,67.63 L109.69,67.65 L109.40,67.67 L109.10,67.69 L108.81,67.71 L108.51,67.73 L108.22,67.75 L107.92,67.77 L107.63,67.79 L107.33,67.81 L107.04,67.83 L106.74,67.85 L106.44,67.87 L106.15,67.89 L105.85,67.91 Z"/><path fill="#e8302a" d="M156.85,59.61 L156.69,59.62 L156.53,59.62 L156.36,59.62 L156.20,59.63 L156.04,59.63 L155.87,59.64 L155.71,59.64 L155.55,59.65 L155.38,59.65 L155.22,59.66 L155.05,59.67 L154.89,59.67 L154.73,59.68 L154.56,59.69 L154.40,59.70 L154.23,59.71 L154.07,59.72 L153.90,59.73 L153.74,59.74 L153.58,59.75 L153.41,59.76 L153.25,59.78 L153.08,59.79 L152.92,59.80 L152.75,59.82 L152.59,59.83 L152.42,59.84 L152.26,59.86 L152.10,59.87 L151.93,59.89 L151.77,59.90 L151.60,59.92 L151.44,59.94 L151.27,59.95 L151.11,59.97 L150.94,59.99 L150.78,60.01 L150.61,60.02 L150.45,60.04 L150.28,60.06 L150.12,60.08 L149.95,60.10 L149.79,60.12 L149.62,60.14 L149.46,60.16 L149.29,60.18 L149.13,60.20 L148.96,60.22 L148.80,60.25 L148.63,60.27 L148.47,60.29 L148.30,60.31 L148.13,60.33 L147.97,60.36 L147.80,60.38 L147.64,60.40 L147.47,60.43 L147.31,60.45 L147.14,60.48 L146.98,60.50 L146.81,60.53 L146.65,60.55 L146.48,60.58 L146.32,60.60 L146.15,60.63 L145.99,60.65 L145.82,60.68 L145.66,60.71 L145.49,60.73 L145.33,60.76 L145.16,60.79 L144.99,60.81 L144.83,60.84 L144.66,60.87 L144.50,60.90 L144.33,60.92 L144.17,60.95 L144.00,60.98 L143.84,61.01 L143.67,61.04 L143.51,61.07 L143.34,61.10 L143.18,61.12 L143.01,61.15 L142.85,61.18 L142.68,61.21 L142.51,61.24 L142.35,61.27 L142.18,61.30 L142.02,61.33 L141.85,61.36 L141.69,61.39 L141.52,61.42 L141.36,61.45 L141.19,61.48 L141.03,61.51 L140.86,61.54 L140.70,61.57 L140.53,61.60 L140.37,61.63 L140.20,61.66 L140.04,61.69 L139.87,61.72 L139.71,61.75 L139.54,61.79 L139.38,61.82 L139.21,61.85 L139.05,61.88 L138.88,61.91 L138.72,61.94 L138.55,61.97 L138.39,62.00 L138.22,62.03 L138.06,62.06 L137.89,62.09 L137.73,62.13 L137.56,62.16 L137.40,62.19 L137.23,62.22 L137.07,62.25 L136.90,62.28 L136.74,62.31 L136.57,62.34 L136.41,62.37 L136.24,62.40 L136.08,62.43 L135.91,62.46 L135.75,62.49 L135.58,62.52 L135.42,62.55 L135.25,62.58 L135.09,62.61 L134.93,62.64 L134.76,62.68 L134.60,62.71 L134.43,62.74 L134.27,62.77 L134.10,62.80 L133.94,62.83 L133.77,62.86 L133.61,62.89 L133.44,62.92 L133.28,62.94 L133.11,62.97 L132.95,63.00 L132.78,63.03 L132.62,63.06 L132.46,63.09 L132.29,63.12 L132.13,63.15 L131.96,63.18 L131.80,63.21 L131.63,63.24 L131.47,63.27 L131.30,63.30 L131.14,63.33 L130.97,63.36 L130.81,63.39 L130.64,63.42 L130.48,63.45 L130.31,63.48 L130.15,63.51 L129.99,63.53 L129.82,63.56 L129.66,63.59 L129.49,63.62 L129.33,63.65 L129.16,63.68 L129.00,63.71 L128.83,63.74 L128.67,63.77 L128.50,63.80 L128.34,63.83 L128.18,63.85 L128.01,63.88 L127.85,63.91 L127.68,63.94 L127.52,63.97 L127.35,64.00 L127.19,64.03 L127.02,64.06 L126.86,64.09 L126.69,64.12 L126.53,64.14 L126.37,64.17 L126.20,64.20 L126.04,64.23 L125.87,64.26 L125.71,64.29 L125.54,64.32 L125.38,64.35 L125.21,64.37 L125.05,64.40 L124.88,64.43 L124.72,64.46 L124.56,64.49 L124.39,64.52 L124.23,64.55 L124.06,64.58 L123.90,64.60 L123.73,64.63 L123.57,64.66 L123.40,64.69 L123.24,64.72 L123.08,64.75 L122.91,64.78 L122.75,64.81 L122.58,64.83 L122.42,64.86 L122.25,64.89 L122.09,64.92 L121.92,64.95 L121.76,64.98 L121.60,65.01 L121.43,65.03 L121.27,65.06 L121.10,65.09 L120.94,65.12 L120.77,65.15 L120.61,65.18 L120.44,65.21 L120.28,65.24 L120.11,65.27 L119.95,65.29 L119.79,65.32 L119.62,65.35 L119.46,65.38 L119.29,65.41 L119.13,65.44 L118.96,65.47 L118.80,65.50 L118.63,65.53 L118.47,65.55 L118.31,65.58 L118.14,65.61 L117.98,65.64 L117.81,65.67 L117.65,65.70 L117.48,65.73 L117.32,65.76 L117.15,65.79 L116.99,65.82 L116.83,65.84 L116.66,65.87 L116.50,65.90 L116.33,65.93 L116.17,65.96 L116.00,65.99 L115.84,66.02 L115.67,66.05 L115.51,66.08 L115.34,66.11 L115.18,66.14 L115.02,66.17 L114.85,66.20 L114.69,66.23 L114.52,66.26 L114.36,66.29 L114.19,66.31 L114.03,66.34 L113.86,66.37 L113.70,66.40 L113.53,66.43 L113.37,66.46 L113.21,66.49 L113.04,66.52 L112.88,66.55 L112.71,66.58 L112.55,66.61 L112.38,66.64 L112.22,66.67 L112.05,66.70 L111.89,66.73 L111.72,66.76 L111.56,66.79 L111.40,66.82 L111.23,66.85 L111.07,66.88 L110.90,66.91 L110.74,66.94 L110.57,66.97 L110.41,67.01 L110.24,67.04 L110.08,67.07 L109.91,67.10 L109.75,67.13 L109.58,67.16 L109.42,67.19 L109.25,67.22 L109.09,67.25 L108.93,67.28 L108.76,67.31 L108.60,67.34 L108.43,67.37 L108.27,67.41 L108.10,67.44 L107.94,67.47 L107.77,67.50 L107.61,67.53 L108.39,72.47 L108.56,72.45 L108.73,72.43 L108.90,72.40 L109.06,72.38 L109.23,72.36 L109.40,72.34 L109.57,72.31 L109.74,72.29 L109.90,72.27 L110.07,72.25 L110.24,72.22 L110.41,72.20 L110.57,72.18 L110.74,72.15 L110.91,72.13 L111.08,72.10 L111.24,72.08 L111.41,72.06 L111.58,72.03 L111.74,72.01 L111.91,71.98 L112.08,71.96 L112.25,71.93 L112.41,71.91 L112.58,71.88 L112.75,71.86 L112.91,71.83 L113.08,71.81 L113.25,71.78 L113.41,71.76 L113.58,71.73 L113.75,71.70 L113.92,71.68 L114.08,71.65 L114.25,71.62 L114.42,71.60 L114.58,71.57 L114.75,71.54 L114.92,71.52 L115.08,71.49 L115.25,71.46 L115.41,71.43 L115.58,71.41 L115.75,71.38 L115.91,71.35 L116.08,71.32 L116.25,71.30 L116.41,71.27 L116.58,71.24 L116.75,71.21 L116.91,71.18 L117.08,71.15 L117.24,71.12 L117.41,71.10 L117.58,71.07 L117.74,71.04 L117.91,71.01 L118.08,70.98 L118.24,70.95 L118.41,70.92 L118.57,70.89 L118.74,70.86 L118.90,70.83 L119.07,70.80 L119.24,70.77 L119.40,70.74 L119.57,70.71 L119.73,70.68 L119.90,70.65 L120.07,70.62 L120.23,70.58 L120.40,70.55 L120.56,70.52 L120.73,70.49 L120.89,70.46 L121.06,70.43 L121.22,70.40 L121.39,70.36 L121.56,70.33 L121.72,70.30 L121.89,70.27 L122.05,70.24 L122.22,70.20 L122.38,70.17 L122.55,70.14 L122.71,70.11 L122.88,70.07 L123.04,70.04 L123.21,70.01 L123.37,69.98 L123.54,69.94 L123.71,69.91 L123.87,69.88 L124.04,69.84 L124.20,69.81 L124.37,69.78 L124.53,69.74 L124.70,69.71 L124.86,69.68 L125.03,69.64 L125.19,69.61 L125.36,69.57 L125.52,69.54 L125.69,69.51 L125.85,69.47 L126.02,69.44 L126.18,69.40 L126.35,69.37 L126.51,69.33 L126.68,69.30 L126.84,69.26 L127.00,69.23 L127.17,69.19 L127.33,69.16 L127.50,69.12 L127.66,69.09 L127.83,69.05 L127.99,69.02 L128.16,68.98 L128.32,68.94 L128.49,68.91 L128.65,68.87 L128.82,68.84 L128.98,68.80 L129.15,68.77 L129.31,68.73 L129.48,68.69 L129.64,68.66 L129.80,68.62 L129.97,68.58 L130.13,68.55 L130.30,68.51 L130.46,68.47 L130.63,68.44 L130.79,68.40 L130.96,68.36 L131.12,68.33 L131.28,68.29 L131.45,68.25 L131.61,68.22 L131.78,68.18 L131.94,68.14 L132.11,68.10 L132.27,68.07 L132.44,68.03 L132.60,67.99 L132.76,67.95 L132.93,67.92 L133.09,67.88 L133.26,67.84 L133.42,67.80 L133.59,67.76 L133.75,67.73 L133.91,67.69 L134.08,67.65 L134.24,67.61 L134.41,67.57 L134.57,67.54 L134.74,67.50 L134.90,67.46 L135.06,67.42 L135.23,67.38 L135.39,67.34 L135.56,67.31 L135.72,67.27 L135.89,67.23 L136.05,67.19 L136.21,67.15 L136.38,67.11 L136.54,67.07 L136.71,67.03 L136.87,66.99 L137.04,66.96 L137.20,66.92 L137.36,66.88 L137.53,66.84 L137.69,66.80 L137.86,66.76 L138.02,66.72 L138.18,66.68 L138.35,66.64 L138.51,66.60 L138.68,66.56 L138.84,66.52 L139.00,66.48 L139.17,66.44 L139.33,66.40 L139.50,66.36 L139.66,66.32 L139.82,66.28 L139.99,66.24 L140.15,66.20 L140.32,66.16 L140.48,66.12 L140.64,66.08 L140.81,66.04 L140.97,66.00 L141.13,65.96 L141.30,65.92 L141.46,65.88 L141.62,65.84 L141.79,65.80 L141.95,65.76 L142.11,65.72 L142.28,65.68 L142.44,65.63 L142.60,65.59 L142.77,65.55 L142.93,65.51 L143.09,65.47 L143.25,65.43 L143.42,65.38 L143.58,65.34 L143.74,65.30 L143.90,65.26 L144.07,65.22 L144.23,65.17 L144.39,65.13 L144.55,65.09 L144.71,65.05 L144.88,65.00 L145.04,64.96 L145.20,64.92 L145.36,64.88 L145.52,64.83 L145.68,64.79 L145.85,64.75 L146.01,64.70 L146.17,64.66 L146.33,64.61 L146.49,64.57 L146.65,64.53 L146.81,64.48 L146.97,64.44 L147.13,64.39 L147.29,64.35 L147.45,64.30 L147.61,64.26 L147.77,64.21 L147.93,64.17 L148.09,64.12 L148.25,64.08 L148.41,64.03 L148.57,63.99 L148.73,63.94 L148.89,63.89 L149.05,63.85 L149.21,63.80 L149.37,63.75 L149.53,63.71 L149.69,63.66 L149.85,63.61 L150.01,63.57 L150.16,63.52 L150.32,63.47 L150.48,63.42 L150.64,63.38 L150.80,63.33 L150.95,63.28 L151.11,63.23 L151.27,63.18 L151.43,63.13 L151.58,63.09 L151.74,63.04 L151.90,62.99 L152.05,62.94 L152.21,62.89 L152.37,62.84 L152.52,62.79 L152.68,62.74 L152.84,62.69 L152.99,62.64 L153.15,62.59 L153.30,62.53 L153.46,62.48 L153.61,62.43 L153.77,62.38 L153.92,62.33 L154.08,62.28 L154.23,62.22 L154.39,62.17 L154.54,62.12 L154.70,62.07 L154.85,62.01 L155.01,61.96 L155.16,61.90 L155.31,61.85 L155.47,61.80 L155.62,61.74 L155.77,61.69 L155.93,61.63 L156.08,61.58 L156.23,61.52 L156.39,61.47 L156.54,61.41 L156.69,61.36 L156.84,61.30 L157.00,61.24 L157.15,61.19 Z"/><path fill="#e8302a" d="M166.12,71.70 L165.92,71.70 L165.72,71.69 L165.53,71.68 L165.33,71.67 L165.13,71.66 L164.93,71.66 L164.73,71.65 L164.54,71.64 L164.34,71.63 L164.14,71.63 L163.94,71.62 L163.75,71.61 L163.55,71.60 L163.35,71.59 L163.15,71.59 L162.95,71.58 L162.76,71.57 L162.56,71.56 L162.36,71.56 L162.16,71.55 L161.97,71.54 L161.77,71.53 L161.57,71.52 L161.37,71.52 L161.18,71.51 L160.98,71.50 L160.78,71.49 L160.58,71.49 L160.38,71.48 L160.19,71.47 L159.99,71.46 L159.79,71.45 L159.59,71.45 L159.40,71.44 L159.20,71.43 L159.00,71.42 L158.80,71.42 L158.61,71.41 L158.41,71.40 L158.21,71.39 L158.01,71.39 L157.82,71.38 L157.62,71.37 L157.42,71.36 L157.22,71.35 L157.02,71.35 L156.83,71.34 L156.63,71.33 L156.43,71.32 L156.23,71.32 L156.04,71.31 L155.84,71.30 L155.64,71.29 L155.44,71.29 L155.25,71.28 L155.05,71.27 L154.85,71.26 L154.65,71.25 L154.46,71.25 L154.26,71.24 L154.06,71.23 L153.86,71.22 L153.67,71.22 L153.47,71.21 L153.27,71.20 L153.07,71.19 L152.88,71.19 L152.68,71.18 L152.48,71.17 L152.28,71.16 L152.08,71.16 L151.89,71.15 L151.69,71.14 L151.49,71.13 L151.29,71.12 L151.10,71.12 L150.90,71.11 L150.70,71.10 L150.50,71.09 L150.31,71.09 L150.11,71.08 L149.91,71.07 L149.71,71.06 L149.52,71.06 L149.32,71.05 L149.12,71.04 L148.92,71.03 L148.73,71.03 L148.53,71.02 L148.33,71.01 L148.13,71.00 L147.94,71.00 L147.74,70.99 L147.54,70.98 L147.34,70.97 L147.15,70.97 L146.95,70.96 L146.75,70.95 L146.55,70.94 L146.36,70.94 L146.16,70.93 L145.96,70.92 L145.76,70.91 L145.57,70.91 L145.37,70.90 L145.17,70.89 L144.97,70.88 L144.78,70.88 L144.58,70.87 L144.38,70.86 L144.18,70.85 L143.99,70.85 L143.79,70.84 L143.59,70.83 L143.39,70.82 L143.20,70.82 L143.00,70.81 L142.80,70.80 L142.60,70.80 L142.41,70.79 L142.21,70.78 L142.01,70.77 L141.81,70.77 L141.62,70.76 L141.42,70.75 L141.22,70.74 L141.02,70.74 L140.83,70.73 L140.63,70.72 L140.43,70.71 L140.23,70.71 L140.04,70.70 L139.84,70.69 L139.64,70.69 L139.44,70.68 L139.25,70.67 L139.05,70.66 L138.85,70.66 L138.65,70.65 L138.46,70.64 L138.26,70.63 L138.06,70.63 L137.86,70.62 L137.67,70.61 L137.47,70.61 L137.27,70.60 L137.07,70.59 L136.88,70.58 L136.68,70.58 L136.48,70.57 L136.28,70.56 L136.09,70.56 L135.89,70.55 L135.69,70.54 L135.50,70.53 L135.30,70.53 L135.10,70.52 L134.90,70.51 L134.71,70.51 L134.51,70.50 L134.31,70.49 L134.11,70.48 L133.92,70.48 L133.72,70.47 L133.52,70.46 L133.32,70.46 L133.13,70.45 L132.93,70.44 L132.73,70.43 L132.53,70.43 L132.34,70.42 L132.14,70.41 L131.94,70.41 L131.74,70.40 L131.55,70.39 L131.35,70.39 L131.15,70.38 L130.96,70.37 L130.76,70.36 L130.56,70.36 L130.36,70.35 L130.17,70.34 L129.97,70.34 L129.77,70.33 L129.57,70.32 L129.38,70.32 L129.18,70.31 L128.98,70.30 L128.78,70.30 L128.59,70.29 L128.39,70.28 L128.19,70.27 L127.99,70.27 L127.80,70.26 L127.60,70.25 L127.40,70.25 L127.21,70.24 L127.01,70.23 L126.81,70.23 L126.61,70.22 L126.42,70.21 L126.22,70.21 L126.02,70.20 L125.82,70.19 L125.63,70.19 L125.43,70.18 L125.23,70.17 L125.03,70.17 L124.84,70.16 L124.64,70.15 L124.44,70.15 L124.25,70.14 L124.05,70.13 L123.85,70.13 L123.65,70.12 L123.46,70.11 L123.26,70.11 L123.06,70.10 L122.86,70.09 L122.67,70.09 L122.47,70.08 L122.27,70.07 L122.07,70.07 L121.88,70.06 L121.68,70.05 L121.48,70.05 L121.29,70.04 L121.09,70.03 L120.89,70.03 L120.69,70.02 L120.50,70.01 L120.30,70.01 L120.10,70.00 L119.90,70.00 L119.71,69.99 L119.51,69.98 L119.31,69.98 L119.12,69.97 L118.92,69.96 L118.72,69.96 L118.52,69.95 L118.33,69.94 L118.13,69.94 L117.93,69.93 L117.73,69.93 L117.54,69.92 L117.34,69.91 L117.14,69.91 L116.95,69.90 L116.75,69.89 L116.55,69.89 L116.35,69.88 L116.16,69.88 L115.96,69.87 L115.76,69.86 L115.56,69.86 L115.37,69.85 L115.17,69.84 L114.97,69.84 L114.78,69.83 L114.58,69.83 L114.38,69.82 L114.18,69.81 L113.99,69.81 L113.79,69.80 L113.59,69.80 L113.40,69.79 L113.20,69.78 L113.00,69.78 L112.80,69.77 L112.61,69.76 L112.41,69.76 L112.21,69.75 L112.01,69.75 L111.82,69.74 L111.62,69.74 L111.42,69.73 L111.23,69.72 L111.03,69.72 L110.83,69.71 L110.63,69.71 L110.44,69.70 L110.24,69.69 L110.04,69.69 L109.85,69.68 L109.65,69.68 L109.45,69.67 L109.25,69.66 L109.06,69.66 L108.86,69.65 L108.66,69.65 L108.46,69.64 L108.27,69.64 L108.07,69.63 L107.87,69.62 L107.68,69.62 L107.48,69.61 L107.28,69.61 L107.08,69.60 L106.92,74.80 L107.11,74.81 L107.31,74.81 L107.51,74.82 L107.71,74.83 L107.90,74.83 L108.10,74.84 L108.30,74.85 L108.50,74.85 L108.69,74.86 L108.89,74.87 L109.09,74.88 L109.29,74.88 L109.48,74.89 L109.68,74.90 L109.88,74.90 L110.08,74.91 L110.27,74.92 L110.47,74.92 L110.67,74.93 L110.87,74.93 L111.06,74.94 L111.26,74.95 L111.46,74.95 L111.66,74.96 L111.85,74.97 L112.05,74.97 L112.25,74.98 L112.45,74.98 L112.64,74.99 L112.84,75.00 L113.04,75.00 L113.24,75.01 L113.43,75.02 L113.63,75.02 L113.83,75.03 L114.02,75.03 L114.22,75.04 L114.42,75.05 L114.62,75.05 L114.81,75.06 L115.01,75.06 L115.21,75.07 L115.41,75.07 L115.60,75.08 L115.80,75.09 L116.00,75.09 L116.20,75.10 L116.39,75.10 L116.59,75.11 L116.79,75.11 L116.99,75.12 L117.18,75.12 L117.38,75.13 L117.58,75.14 L117.78,75.14 L117.97,75.15 L118.17,75.15 L118.37,75.16 L118.57,75.16 L118.76,75.17 L118.96,75.17 L119.16,75.18 L119.36,75.18 L119.55,75.19 L119.75,75.19 L119.95,75.20 L120.15,75.20 L120.34,75.21 L120.54,75.22 L120.74,75.22 L120.94,75.23 L121.13,75.23 L121.33,75.24 L121.53,75.24 L121.72,75.25 L121.92,75.25 L122.12,75.26 L122.32,75.26 L122.51,75.27 L122.71,75.27 L122.91,75.28 L123.11,75.28 L123.30,75.29 L123.50,75.29 L123.70,75.30 L123.90,75.30 L124.09,75.31 L124.29,75.31 L124.49,75.32 L124.69,75.32 L124.88,75.33 L125.08,75.33 L125.28,75.34 L125.48,75.34 L125.67,75.34 L125.87,75.35 L126.07,75.35 L126.26,75.36 L126.46,75.36 L126.66,75.37 L126.86,75.37 L127.05,75.38 L127.25,75.38 L127.45,75.39 L127.65,75.39 L127.84,75.40 L128.04,75.40 L128.24,75.41 L128.44,75.41 L128.63,75.42 L128.83,75.42 L129.03,75.43 L129.22,75.43 L129.42,75.44 L129.62,75.44 L129.82,75.45 L130.01,75.45 L130.21,75.46 L130.41,75.46 L130.61,75.46 L130.80,75.47 L131.00,75.47 L131.20,75.48 L131.40,75.48 L131.59,75.49 L131.79,75.49 L131.99,75.50 L132.18,75.50 L132.38,75.51 L132.58,75.51 L132.78,75.52 L132.97,75.52 L133.17,75.53 L133.37,75.53 L133.57,75.54 L133.76,75.54 L133.96,75.55 L134.16,75.55 L134.35,75.56 L134.55,75.56 L134.75,75.57 L134.95,75.57 L135.14,75.58 L135.34,75.58 L135.54,75.59 L135.74,75.59 L135.93,75.60 L136.13,75.60 L136.33,75.61 L136.52,75.61 L136.72,75.62 L136.92,75.62 L137.12,75.63 L137.31,75.63 L137.51,75.64 L137.71,75.64 L137.91,75.65 L138.10,75.65 L138.30,75.66 L138.50,75.66 L138.69,75.67 L138.89,75.67 L139.09,75.68 L139.29,75.68 L139.48,75.69 L139.68,75.69 L139.88,75.70 L140.07,75.70 L140.27,75.71 L140.47,75.71 L140.67,75.72 L140.86,75.72 L141.06,75.73 L141.26,75.73 L141.45,75.74 L141.65,75.75 L141.85,75.75 L142.05,75.76 L142.24,75.76 L142.44,75.77 L142.64,75.77 L142.84,75.78 L143.03,75.78 L143.23,75.79 L143.43,75.80 L143.62,75.80 L143.82,75.81 L144.02,75.81 L144.22,75.82 L144.41,75.82 L144.61,75.83 L144.81,75.84 L145.00,75.84 L145.20,75.85 L145.40,75.85 L145.60,75.86 L145.79,75.87 L145.99,75.87 L146.19,75.88 L146.38,75.88 L146.58,75.89 L146.78,75.90 L146.97,75.90 L147.17,75.91 L147.37,75.91 L147.57,75.92 L147.76,75.93 L147.96,75.93 L148.16,75.94 L148.35,75.95 L148.55,75.95 L148.75,75.96 L148.95,75.97 L149.14,75.97 L149.34,75.98 L149.54,75.99 L149.73,75.99 L149.93,76.00 L150.13,76.01 L150.33,76.01 L150.52,76.02 L150.72,76.03 L150.92,76.03 L151.11,76.04 L151.31,76.05 L151.51,76.05 L151.70,76.06 L151.90,76.07 L152.10,76.07 L152.30,76.08 L152.49,76.09 L152.69,76.10 L152.89,76.10 L153.08,76.11 L153.28,76.12 L153.48,76.13 L153.67,76.13 L153.87,76.14 L154.07,76.15 L154.27,76.16 L154.46,76.16 L154.66,76.17 L154.86,76.18 L155.05,76.19 L155.25,76.19 L155.45,76.20 L155.64,76.21 L155.84,76.22 L156.04,76.23 L156.24,76.23 L156.43,76.24 L156.63,76.25 L156.83,76.26 L157.02,76.27 L157.22,76.28 L157.42,76.28 L157.61,76.29 L157.81,76.30 L158.01,76.31 L158.20,76.32 L158.40,76.33 L158.60,76.34 L158.80,76.34 L158.99,76.35 L159.19,76.36 L159.39,76.37 L159.58,76.38 L159.78,76.39 L159.98,76.40 L160.17,76.41 L160.37,76.42 L160.57,76.43 L160.76,76.43 L160.96,76.44 L161.16,76.45 L161.36,76.46 L161.55,76.47 L161.75,76.48 L161.95,76.49 L162.14,76.50 L162.34,76.51 L162.54,76.52 L162.73,76.53 L162.93,76.54 L163.13,76.55 L163.32,76.56 L163.52,76.57 L163.72,76.58 L163.91,76.59 L164.11,76.60 L164.31,76.61 L164.50,76.62 L164.70,76.63 L164.90,76.64 L165.09,76.65 L165.29,76.66 L165.49,76.68 L165.68,76.69 L165.88,76.70 Z"/></svg>
</body></html>
